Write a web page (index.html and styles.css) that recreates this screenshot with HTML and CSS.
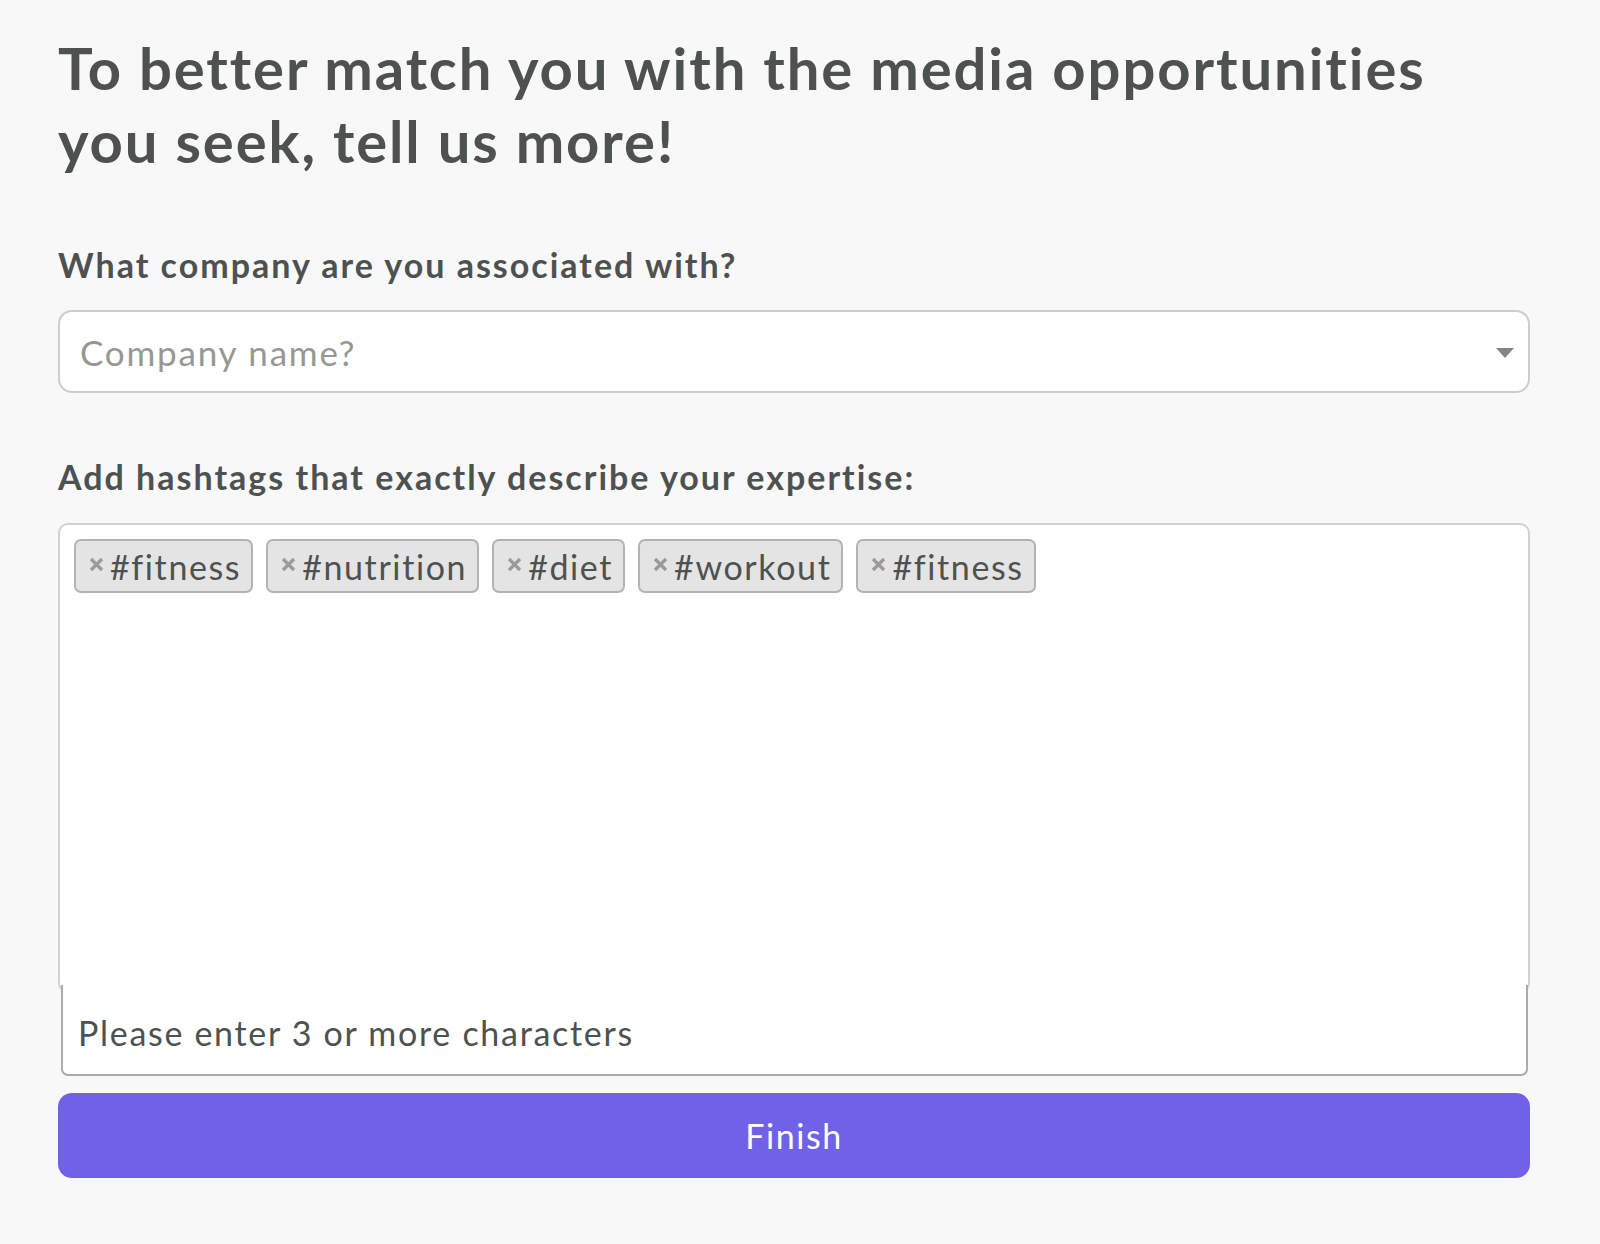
FILE: index.html
```html
<!DOCTYPE html>
<html lang="en">
<head>
<meta charset="utf-8">
<title>Tell us more</title>
<link rel="stylesheet" href="styles.css">
</head>
<body>
<main class="page">
  <h1 class="title">To better match you with the media opportunities you seek, tell us more!</h1>

  <section class="field field-company">
    <label class="label">What company are you associated with?</label>
    <div class="select">
      <span class="placeholder">Company name?</span>
      <span class="arrow"></span>
    </div>
  </section>

  <section class="field field-tags">
    <label class="label">Add hashtags that exactly describe your expertise:</label>
    <div class="tags-box">
      <span class="tag"><svg class="x" width="15" height="15" viewBox="0 0 15 15"><path d="M2 2L13 13M13 2L2 13"/></svg>#fitness</span>
      <span class="tag"><svg class="x" width="15" height="15" viewBox="0 0 15 15"><path d="M2 2L13 13M13 2L2 13"/></svg>#nutrition</span>
      <span class="tag"><svg class="x" width="15" height="15" viewBox="0 0 15 15"><path d="M2 2L13 13M13 2L2 13"/></svg>#diet</span>
      <span class="tag"><svg class="x" width="15" height="15" viewBox="0 0 15 15"><path d="M2 2L13 13M13 2L2 13"/></svg>#workout</span>
      <span class="tag"><svg class="x" width="15" height="15" viewBox="0 0 15 15"><path d="M2 2L13 13M13 2L2 13"/></svg>#fitness</span>
    </div>
    <div class="results">Please enter 3 or more characters</div>
  </section>

  <button class="finish" type="button">Finish</button>
</main>
</body>
</html>
```

FILE: styles.css
```css
html, body {
  margin: 0;
  padding: 0;
  background: #f8f8f8;
}

body {
  font-family: Lato, "Open Sans", "Liberation Sans", sans-serif;
  font-variant-ligatures: none;
  color: #4d5251;
}

.page {
  width: 1472px;
  margin-left: 58px;
  padding-top: 31px;
  display: flex;
  flex-direction: column;
}

.title {
  margin: 0;
  font-size: 58px;
  line-height: 73px;
  font-weight: 700;
  letter-spacing: 1.9px;
  width: 1440px;
}

.field {
  display: flex;
  flex-direction: column;
}

.label {
  font-size: 34px;
  font-weight: 700;
  line-height: 40px;
  letter-spacing: 2px;
}

.field-company {
  margin-top: 68px;
}

.field-company .label {
  margin-bottom: 25px;
}

.select {
  height: 79px;
  border: 2px solid #cfcccc;
  border-radius: 14px;
  background: #fff;
  display: flex;
  align-items: center;
  justify-content: space-between;
  padding: 0 14px 0 20px;
}

.placeholder {
  font-size: 35px;
  letter-spacing: 1.8px;
  color: #979793;
}

.arrow {
  width: 0;
  height: 0;
  border-left: 9px solid transparent;
  border-right: 9px solid transparent;
  border-top: 10px solid #858585;
  margin-top: 2px;
}

.field-tags {
  margin-top: 64px;
}

.field-tags .label {
  margin-bottom: 26px;
}

.tags-box {
  height: 438px;
  border: 2px solid #d2d0d0;
  border-radius: 10px;
  background: #fff;
  padding: 14px;
  display: flex;
  flex-wrap: wrap;
  align-content: flex-start;
  gap: 13px;
}

.tag {
  height: 50px;
  border: 2px solid #b3b3b3;
  border-radius: 7px;
  background: #e4e4e4;
  display: flex;
  align-items: center;
  padding: 0 10px 0 13px;
  font-size: 34px;
  letter-spacing: 1.6px;
  color: #4d5251;
}

.x {
  flex: none;
  margin: 0 6px 3px 0;
  stroke: #9a9a9a;
  stroke-width: 3.2;
  fill: none;
}

.results {
  position: relative;
  margin: -8px 2px 0 3px;
  height: 83px;
  padding: 6px 15px 0;
  background: #fff;
  border: 2px solid #ababab;
  border-top: none;
  border-radius: 0 0 7px 7px;
  display: flex;
  align-items: center;
  font-size: 34px;
  letter-spacing: 1.7px;
  color: #4d5251;
}

.finish {
  margin-top: 17px;
  height: 85px;
  border: none;
  border-radius: 14px;
  background: #7061e8;
  color: #fff;
  font-family: inherit;
  font-size: 34px;
  letter-spacing: 1.6px;
  cursor: pointer;
}
```
